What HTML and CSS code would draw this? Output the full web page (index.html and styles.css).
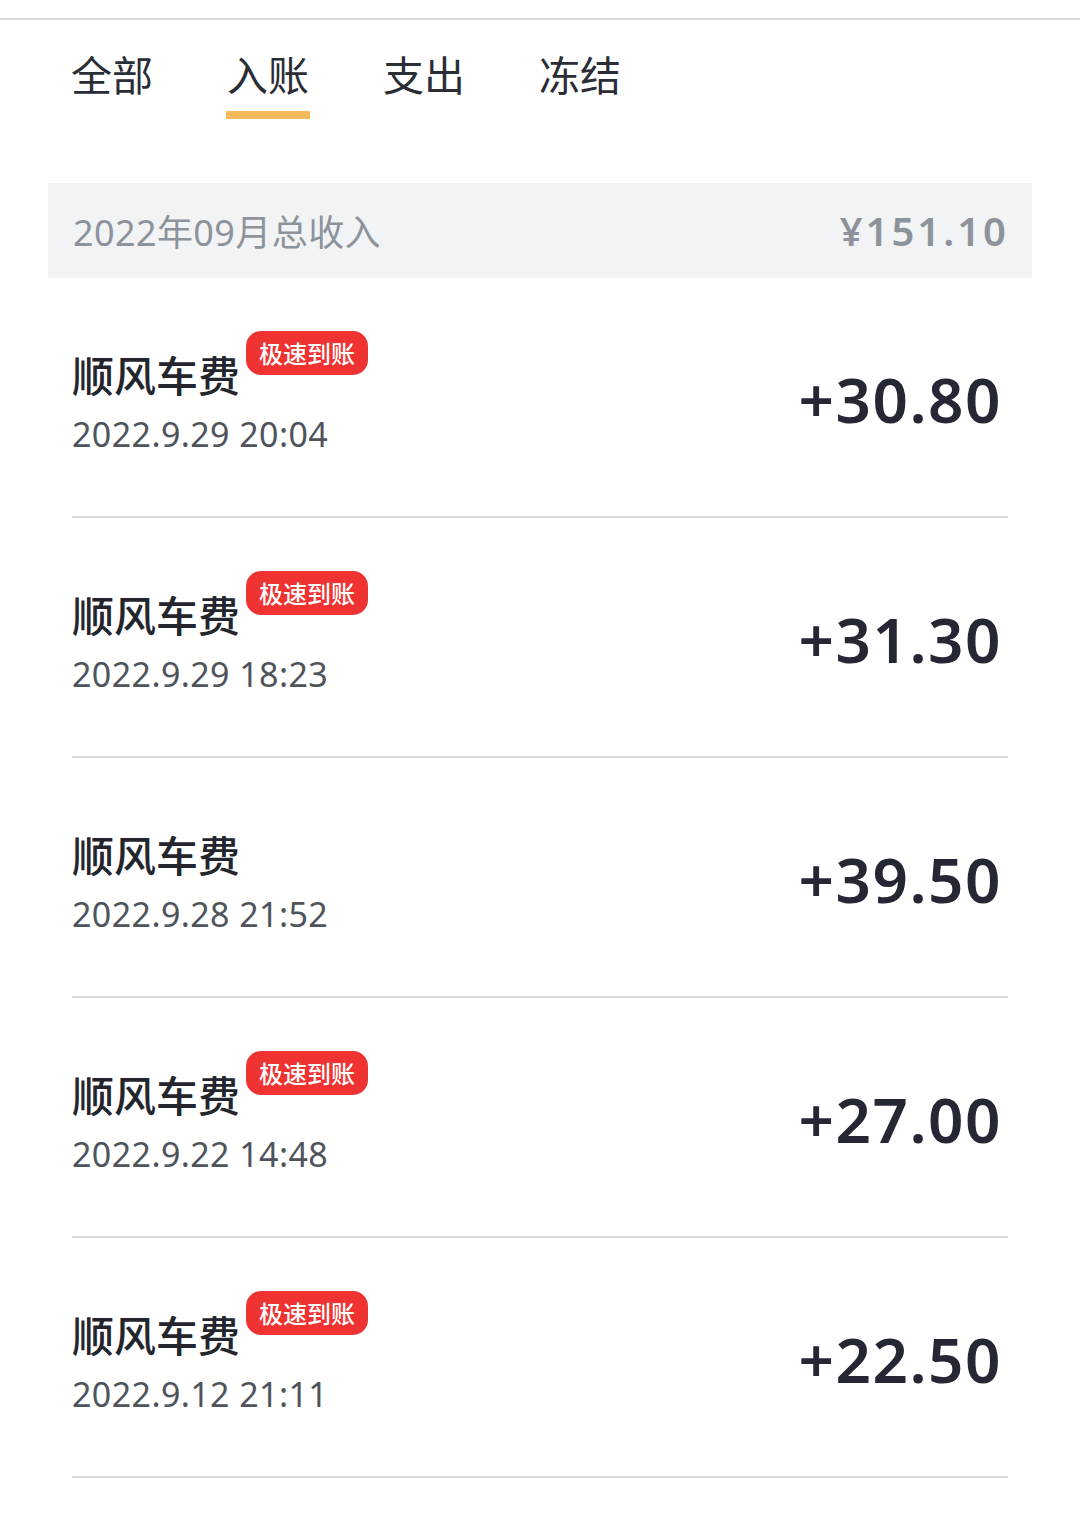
FILE: index.html
```html
<!DOCTYPE html>
<html lang="zh-CN">
<head>
<meta charset="utf-8">
<title>入账明细</title>
<link rel="stylesheet" href="styles.css">
</head>
<body>
<div class="topbar"></div>
<nav class="tabs">
  <div class="tab">全部</div>
  <div class="tab active">入账</div>
  <div class="tab">支出</div>
  <div class="tab">冻结</div>
</nav>
<section class="summary">
  <span class="summary-label">2022年09月总收入</span>
  <span class="summary-value">¥151.10</span>
</section>
<ul class="list">
  <li class="row">
    <div class="info">
      <div class="title-line"><span class="title">顺风车费</span><span class="badge">极速到账</span></div>
      <div class="date">2022.9.29 20:04</div>
    </div>
    <div class="amount">+30.80</div>
  </li>
  <li class="row">
    <div class="info">
      <div class="title-line"><span class="title">顺风车费</span><span class="badge">极速到账</span></div>
      <div class="date">2022.9.29 18:23</div>
    </div>
    <div class="amount">+31.30</div>
  </li>
  <li class="row">
    <div class="info">
      <div class="title-line"><span class="title">顺风车费</span></div>
      <div class="date">2022.9.28 21:52</div>
    </div>
    <div class="amount">+39.50</div>
  </li>
  <li class="row">
    <div class="info">
      <div class="title-line"><span class="title">顺风车费</span><span class="badge">极速到账</span></div>
      <div class="date">2022.9.22 14:48</div>
    </div>
    <div class="amount">+27.00</div>
  </li>
  <li class="row">
    <div class="info">
      <div class="title-line"><span class="title">顺风车费</span><span class="badge">极速到账</span></div>
      <div class="date">2022.9.12 21:11</div>
    </div>
    <div class="amount">+22.50</div>
  </li>
</ul>
</body>
</html>
```

FILE: styles.css
```css
* { box-sizing: border-box; }
html, body {
  margin: 0;
  padding: 0;
  background: #ffffff;
  font-family: "Noto Sans CJK SC", "Noto Sans", sans-serif;
  color: #2a2c35;
}
.topbar {
  height: 20px;
  border-bottom: 2px solid #d5d9d9;
}
.tabs {
  display: flex;
  gap: 74px;
  padding: 28px 0 0 71px;
}
.tab {
  font-size: 41px;
  line-height: 50px;
  color: #2b2d36;
  padding-bottom: 21px;
  position: relative;
}
.tab.active::after {
  content: "";
  position: absolute;
  left: -1px;
  right: -1px;
  bottom: 0;
  height: 8px;
  background: #f6b95c;
}
.summary {
  margin: 64px 48px 0;
  height: 95px;
  background: #f2f3f5;
  display: flex;
  align-items: center;
  justify-content: space-between;
  padding: 0 23px 0 25px;
  color: #8d939b;
  font-family: "Noto Sans", "Noto Sans CJK SC", sans-serif;
}
.summary-label {
  font-size: 36px;
  letter-spacing: 0.4px;
}
.summary-value {
  font-size: 40px;
  font-weight: 600;
  letter-spacing: 3px;
}
.list {
  list-style: none;
  margin: 0 72px;
  padding: 0;
}
.row {
  height: 240px;
  border-bottom: 2px solid #d9d9d9;
  display: flex;
  justify-content: space-between;
  align-items: center;
}
.info {
  display: flex;
  flex-direction: column;
  align-self: flex-start;
  padding-top: 53px;
}
.title-line {
  display: flex;
  align-items: flex-start;
  height: 68px;
}
.title {
  font-size: 42px;
  line-height: 50px;
  font-weight: 500;
  margin-top: 18px;
  color: #24262e;
}
.badge {
  margin-left: 6px;
  height: 44px;
  line-height: 44px;
  padding: 0 13px;
  font-size: 24px;
  font-weight: 500;
  color: #ffffff;
  background: #ef3232;
  border-radius: 15px;
}
.date {
  margin-top: 15px;
  font-family: "Noto Sans", "Noto Sans CJK SC", sans-serif;
  font-size: 34px;
  line-height: 40px;
  color: #4f545c;
  letter-spacing: 0.4px;
}
.amount {
  font-family: "Noto Sans", "Noto Sans CJK SC", sans-serif;
  font-size: 62px;
  font-weight: 600;
  letter-spacing: 1.5px;
  color: #252834;
  padding-right: 6px;
  padding-top: 4px;
}
```
